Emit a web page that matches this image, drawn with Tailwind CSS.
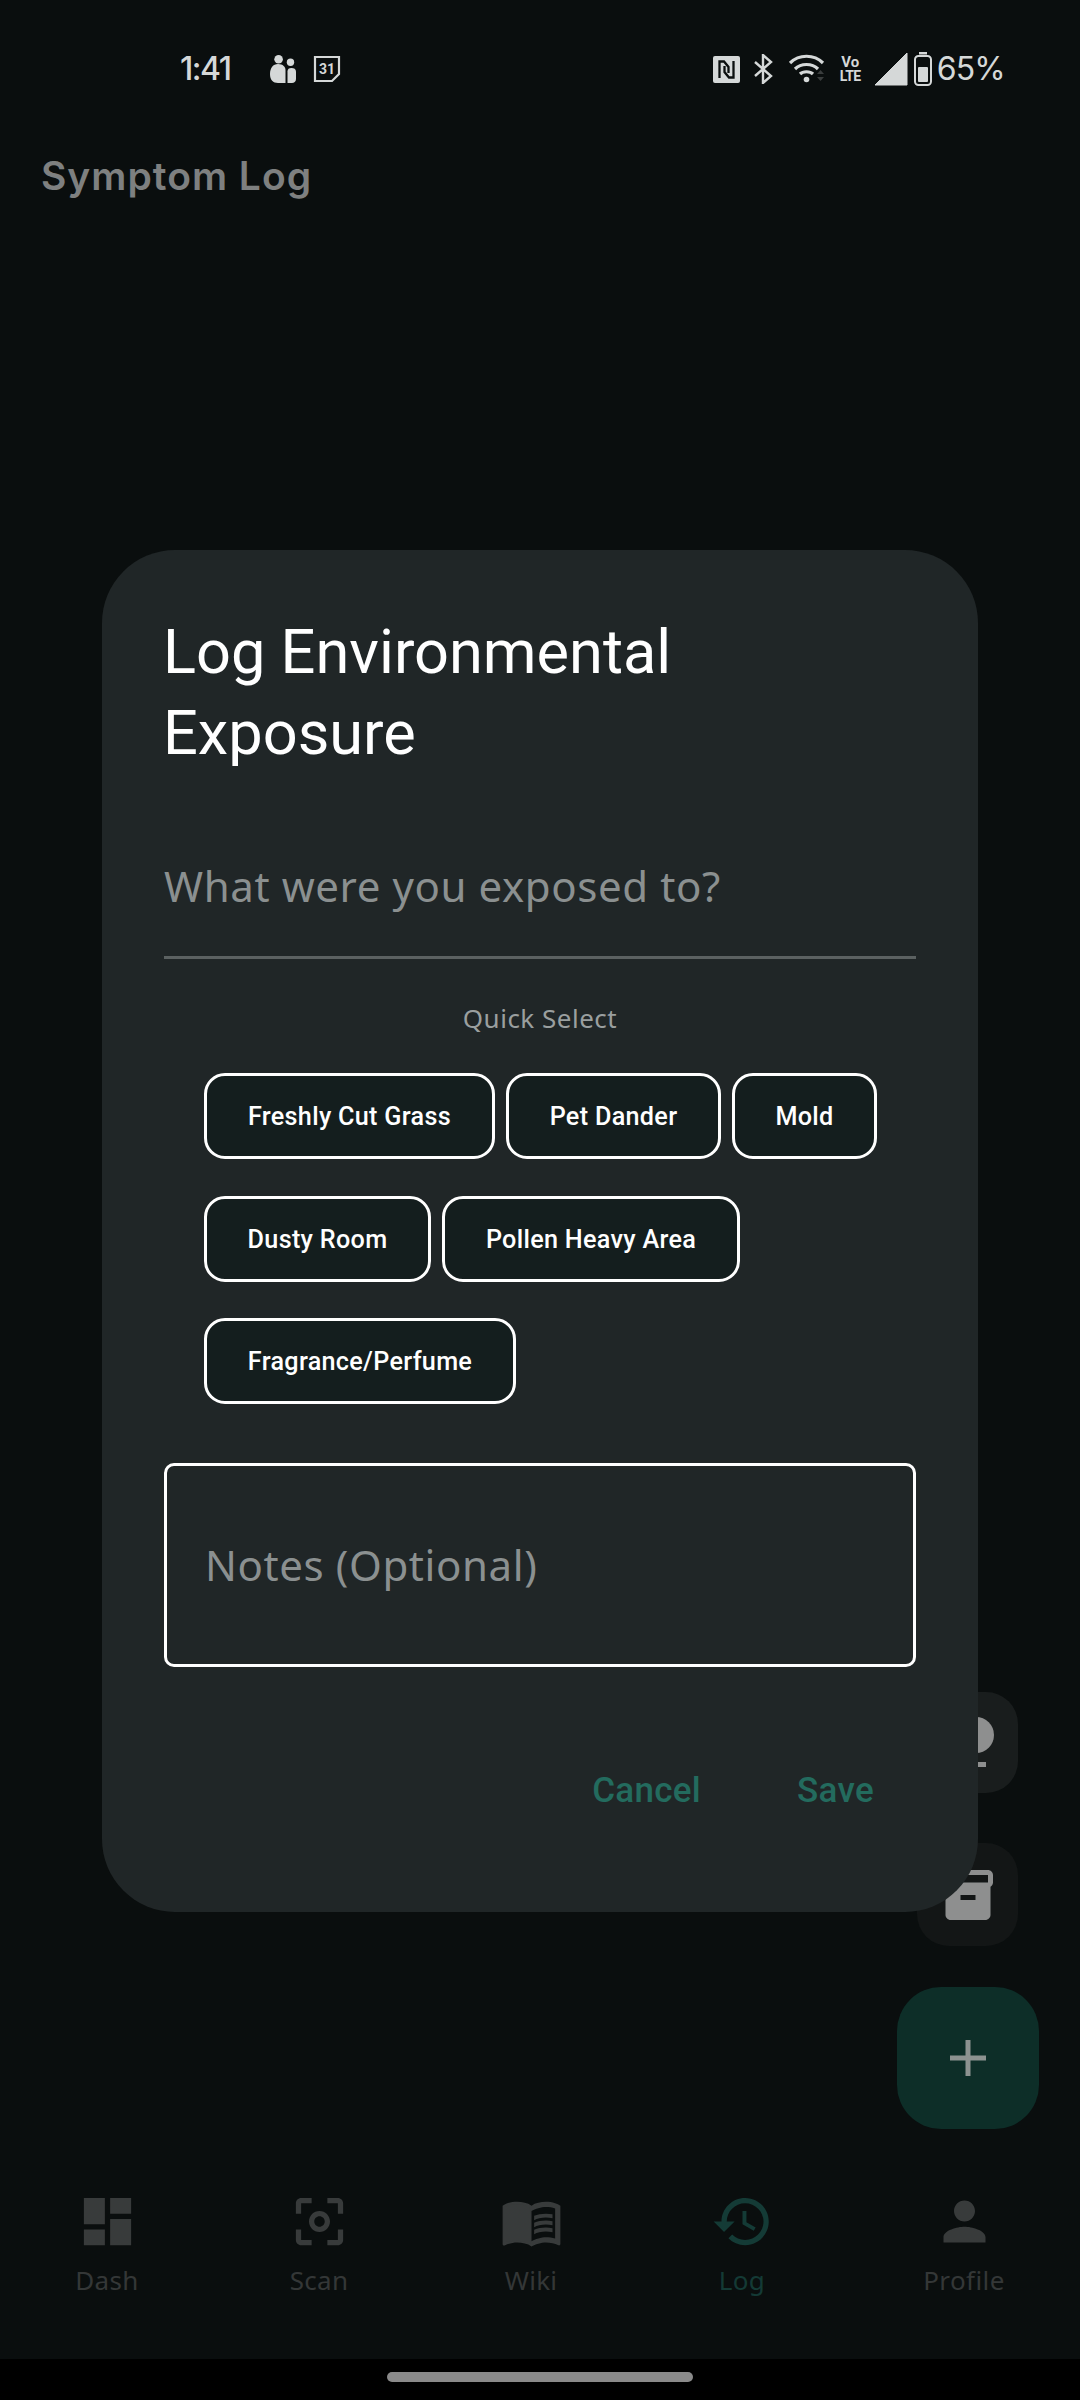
<!DOCTYPE html>
<html><head><meta charset="utf-8">
<script src="https://cdn.jsdelivr.net/npm/@tailwindcss/browser@4"></script>
</head>
<body class="m-0 bg-black">
<div class="relative w-[1080px] h-[2400px] overflow-hidden bg-[#0a0e0e] font-['Roboto',sans-serif]">
  <!-- status bar -->
  <div class="h-[138px] flex items-center justify-between pl-[180px] pr-[75px] text-[#d5d8d8]">
    <div class="flex items-center">
      <span class="font-['Inter',sans-serif] font-medium text-[32px] leading-none tracking-[-1.500px] w-[90px]">1:41</span>
      <svg class="w-[26px] h-[29px]" viewBox="0 0 26 29" fill="#d5d8d8"><circle cx="8.600" cy="4.300" r="4.300"/><circle cx="20.500" cy="7.200" r="3.700"/><path d="M0 19c0-6 3-10 8-10s7.500 3 7.500 6v13H8c-5 0-8-3-8-9z"/><path d="M17.500 16.500c0-2.500 1.500-3.500 4-3.500s4.500 1 4.500 3.500v7.500c0 2.500-2 4-4 4h-4.500z"/></svg>
      <svg class="w-[28px] h-[28px] ml-[17px]" viewBox="0 0 28 28" fill="none"><path d="M2 2h24v17l-7 7H2z" stroke="#d5d8d8" stroke-width="2.200"/><text x="14" y="19" text-anchor="middle" font-family="Roboto" font-weight="700" font-size="14" fill="#d5d8d8">31</text></svg>
    </div>
    <div class="flex items-center">
      <svg class="w-[27px] h-[27px]" viewBox="0 0 27 27"><rect width="27" height="27" rx="2" fill="#d5d8d8"/><path d="M6.500 22V5.500h4.500l4.500 5.500v6M20.500 5v16.500H16l-4.500-5.500v-6" stroke="#0a0e0e" stroke-width="2.300" fill="none"/></svg>
      <svg class="w-[20px] h-[30px] ml-[14px]" viewBox="0 0 20 30" fill="none"><path d="M1 8l16 14-8 7V1l8 7L1 22" stroke="#d5d8d8" stroke-width="2.400"/></svg>
      <svg class="w-[37px] h-[30px] ml-[15px]" viewBox="0 0 37 30" fill="none"><path d="M1 9c9-9 24-9 33 0M6 15c6-6 17-6 23 0M11 20c3-3 10-3 13 0" stroke="#d5d8d8" stroke-width="3.200"/><circle cx="17.500" cy="25.500" r="2.800" fill="#d5d8d8"/><path d="M28 20l3.500-4 3.500 4zM28 23l3.500 4 3.500-4z" fill="#3a3d3d"/></svg>
      <div class="ml-[15px] flex flex-col items-center w-[19px] font-['Roboto',sans-serif] font-bold text-[#d5d8d8]"><span class="text-[15px] leading-[14px]">Vo</span><span class="text-[14px] leading-[14px] tracking-[-0.500px]">LTE</span></div>
      <svg class="w-[34px] h-[34px] ml-[14px]" viewBox="0 0 34 34"><path d="M33 1v32H1z" fill="#d5d8d8" stroke="#d5d8d8" stroke-linejoin="round"/></svg>
      <svg class="w-[18px] h-[34px] ml-[6px]" viewBox="0 0 18 34" fill="none"><rect x="5" y="0" width="8" height="2.500" fill="#d5d8d8"/><rect x="1" y="4" width="16" height="29" rx="3.500" stroke="#d5d8d8" stroke-width="2"/><rect x="4" y="15" width="10" height="15" rx="1" fill="#d5d8d8"/></svg>
      <span class="ml-[5px] font-['Inter',sans-serif] text-[32px] leading-none tracking-[-0.800px]">65%</span>
    </div>
  </div>
  <!-- app title -->
  <div class="absolute left-[41px] top-[152px] font-['Inter',sans-serif] font-semibold text-[39px] leading-[48px] tracking-[1px] text-[#7e8080]">Symptom Log</div>

  <!-- floating buttons -->
  <div class="absolute left-[917px] top-[1692px] w-[101px] h-[101px] rounded-[32px] bg-[#191d1d]">
    <svg class="w-[101px] h-[101px]" viewBox="0 0 101 101" fill="#8e8f8f"><circle cx="59" cy="43" r="18"/><rect x="40" y="70" width="29" height="5"/></svg>
  </div>
  <div class="absolute left-[917px] top-[1843px] w-[101px] h-[103px] rounded-[32px] bg-[#131616] flex items-center justify-center">
    <svg class="w-[60px] h-[60px]" viewBox="0 0 24 24" fill="#8e8f8f"><path d="M20 2H4c-1 0-2 .9-2 2v3.010c0 .72.430 1.340 1 1.690V20c0 1.100 1.100 2 2 2h14c.9 0 2-.9 2-2V8.700c.57-.35 1-.97 1-1.690V4c0-1.100-1-2-2-2zm-5 12H9v-2h6v2zm5-7H4V4l16-.02V7z"/></svg>
  </div>
  <div class="absolute left-[897px] top-[1987px] w-[142px] h-[142px] rounded-[44px] bg-[#0d2e28] flex items-center justify-center">
    <svg class="w-[36px] h-[36px]" viewBox="0 0 36 36"><path d="M15.500 0h5v15.500H36v5H20.500V36h-5V20.500H0v-5h15.500z" fill="#8c9290"/></svg>
  </div>

  <!-- bottom nav -->
  <div class="absolute left-0 top-[2160px] w-full h-[199px]">
    <div class="absolute left-[46px] top-[30px] w-[122px] flex flex-col items-center">
      <svg class="w-[63px] h-[63px]" viewBox="0 0 24 24" fill="#383b3b"><path d="M3 13h8V3H3v10zm0 8h8v-6H3v6zm10 0h8V11h-8v10zm0-18v6h8V3h-8z"/></svg>
      <span class="mt-[9px] font-['Noto_Sans',sans-serif] text-[26px] leading-[36px] text-[#343737] tracking-[0.300px]">Dash</span>
    </div>
    <div class="absolute left-[258px] top-[30px] w-[122px] flex flex-col items-center">
      <svg class="w-[63px] h-[63px]" viewBox="0 0 24 24" fill="#383b3b"><path d="M5 15H3v4c0 1.100.9 2 2 2h4v-2H5v-4zM5 5h4V3H5c-1.100 0-2 .9-2 2v4h2V5zm14-2h-4v2h4v4h2V5c0-1.100-.9-2-2-2zm0 16h-4v2h4c1.100 0 2-.9 2-2v-4h-2v4zM12 8c-2.210 0-4 1.790-4 4s1.790 4 4 4 4-1.790 4-4-1.790-4-4-4zm0 6c-1.100 0-2-.9-2-2s.9-2 2-2 2 .9 2 2-.9 2-2 2z"/></svg>
      <span class="mt-[9px] font-['Noto_Sans',sans-serif] text-[26px] leading-[36px] text-[#343737] tracking-[0.300px]">Scan</span>
    </div>
    <div class="absolute left-[470px] top-[30px] w-[122px] flex flex-col items-center">
      <svg class="w-[63px] h-[63px]" viewBox="0 0 24 24" fill="#383b3b"><path d="M21 5c-1.110-.35-2.330-.5-3.500-.5-1.950 0-4.050.4-5.500 1.500-1.450-1.100-3.550-1.500-5.500-1.500S2.450 4.900 1 6v14.650c0 .25.25.5.5.5.1 0 .15-.05.25-.05C3.100 20.450 5.050 20 6.500 20c1.950 0 4.050.4 5.500 1.500 1.350-.85 3.800-1.500 5.500-1.500 1.650 0 3.350.3 4.750 1.050.1.05.15.05.25.05.25 0 .5-.25.5-.5V6c-.6-.45-1.250-.75-2-1zm0 13.500c-1.100-.35-2.300-.5-3.500-.5-1.700 0-4.150.65-5.500 1.500V8c1.350-.85 3.800-1.500 5.500-1.500 1.200 0 2.400.15 3.500.5v11.500z"/><path d="M17.500 10.500c.88 0 1.730.09 2.500.26V9.240c-.79-.15-1.640-.24-2.500-.24-1.700 0-3.240.29-4.500.83v1.660c1.130-.64 2.700-.99 4.500-.99zM13 12.490v1.660c1.130-.64 2.700-.99 4.500-.99.880 0 1.730.09 2.500.26V11.900c-.79-.15-1.640-.24-2.500-.24-1.700 0-3.240.3-4.500.83zM17.500 14.330c-1.700 0-3.240.29-4.500.83v1.660c1.130-.64 2.700-.99 4.500-.99.880 0 1.730.09 2.500.26v-1.520c-.79-.16-1.640-.24-2.500-.24z"/><path d="M1.500 6.500c3-1.500 7.500-1.500 10 .5v13.500c-3-1.500-7-1.500-10-.5z"/></svg>
      <span class="mt-[9px] font-['Noto_Sans',sans-serif] text-[26px] leading-[36px] text-[#343737] tracking-[0.300px]">Wiki</span>
    </div>
    <div class="absolute left-[681px] top-[30px] w-[122px] flex flex-col items-center">
      <svg class="w-[63px] h-[63px]" viewBox="0 0 24 24" fill="#143b36"><path d="M13 3c-4.970 0-9 4.030-9 9H1l3.890 3.890.07.140L9 12H6c0-3.870 3.130-7 7-7s7 3.130 7 7-3.130 7-7 7c-1.930 0-3.680-.79-4.940-2.060l-1.420 1.420C8.270 19.990 10.510 21 13 21c4.970 0 9-4.030 9-9s-4.030-9-9-9zm-1 5v5l4.280 2.540.72-1.210-3.500-2.080V8H12z"/></svg>
      <span class="mt-[9px] font-['Noto_Sans',sans-serif] text-[26px] leading-[36px] text-[#143a35] tracking-[0.350px]">Log</span>
    </div>
    <div class="absolute left-[904px] top-[30px] w-[120px] flex flex-col items-center">
      <svg class="w-[63px] h-[63px]" viewBox="0 0 24 24" fill="#383b3b"><path d="M12 12c2.210 0 4-1.790 4-4s-1.790-4-4-4-4 1.790-4 4 1.790 4 4 4zm0 2c-2.670 0-8 1.340-8 4v2h16v-2c0-2.660-5.330-4-8-4z"/></svg>
      <span class="mt-[9px] font-['Noto_Sans',sans-serif] text-[26px] leading-[36px] text-[#343737] tracking-[0.400px]">Profile</span>
    </div>
  </div>
  <!-- gesture bar -->
  <div class="absolute left-0 top-[2359px] w-full h-[41px] bg-black flex justify-center pt-[13px]">
    <div class="w-[306px] h-[10px] rounded-full bg-[#8a8a8a]"></div>
  </div>

  <!-- dialog -->
  <div class="absolute left-[102px] top-[550px] w-[876px] h-[1362px] rounded-[73px] bg-[#202627] px-[62px] pt-[62px]">
    <h1 class="ml-[-1px] font-['Roboto',sans-serif] font-normal text-[61.300px] leading-[81px] text-white">Log Environmental<br>Exposure</h1>
    <div class="mt-[60px] h-[125px] border-b-[3px] border-[#5b6161] font-['Noto_Sans',sans-serif] text-[42px] leading-[103px] tracking-[0.600px] text-[#8b9090]">What were you exposed to?</div>
    <div class="mt-[42px] text-center font-['Noto_Sans',sans-serif] text-[26px] leading-[34px] tracking-[0.500px] text-[#9a9f9f]">Quick Select</div>
    <div class="mt-[38px] pl-[40px] flex flex-col gap-[36.500px]">
      <div class="flex gap-[11px]">
        <div class="h-[86px] w-[291px] pt-[2px] rounded-[21px] border-[3px] border-white bg-[#141e1e] flex items-center justify-center text-white text-[25.200px] font-medium tracking-[0.300px]">Freshly Cut Grass</div>
        <div class="h-[86px] w-[215px] pt-[2px] rounded-[21px] border-[3px] border-white bg-[#141e1e] flex items-center justify-center text-white text-[25.200px] font-medium tracking-[0.300px]">Pet Dander</div>
        <div class="h-[86px] w-[145px] pt-[2px] rounded-[21px] border-[3px] border-white bg-[#141e1e] flex items-center justify-center text-white text-[25.200px] font-medium tracking-[0.300px]">Mold</div>
      </div>
      <div class="flex gap-[11px]">
        <div class="h-[86px] w-[227px] pt-[2px] rounded-[21px] border-[3px] border-white bg-[#141e1e] flex items-center justify-center text-white text-[25.200px] font-medium tracking-[0.300px]">Dusty Room</div>
        <div class="h-[86px] w-[298px] pt-[2px] rounded-[21px] border-[3px] border-white bg-[#141e1e] flex items-center justify-center text-white text-[25.200px] font-medium tracking-[0.300px]">Pollen Heavy Area</div>
      </div>
      <div class="flex gap-[11px]">
        <div class="h-[86px] w-[312px] pt-[2px] rounded-[21px] border-[3px] border-white bg-[#141e1e] flex items-center justify-center text-white text-[25.200px] font-medium tracking-[0.300px]">Fragrance/Perfume</div>
      </div>
    </div>
    <div class="mt-[59px] h-[204px] pb-[2px] rounded-[10px] border-[3px] border-white flex items-center pl-[38px] font-['Noto_Sans',sans-serif] text-[42px] tracking-[0.600px] text-[#8b9090]">Notes (Optional)</div>
    <div class="mt-[102px] flex justify-end gap-[96px] pr-[42px] text-[35px] leading-[44px] font-medium text-[#236b5e] tracking-[0.300px]">
      <span>Cancel</span><span>Save</span>
    </div>
  </div>
</div>
</body></html>
